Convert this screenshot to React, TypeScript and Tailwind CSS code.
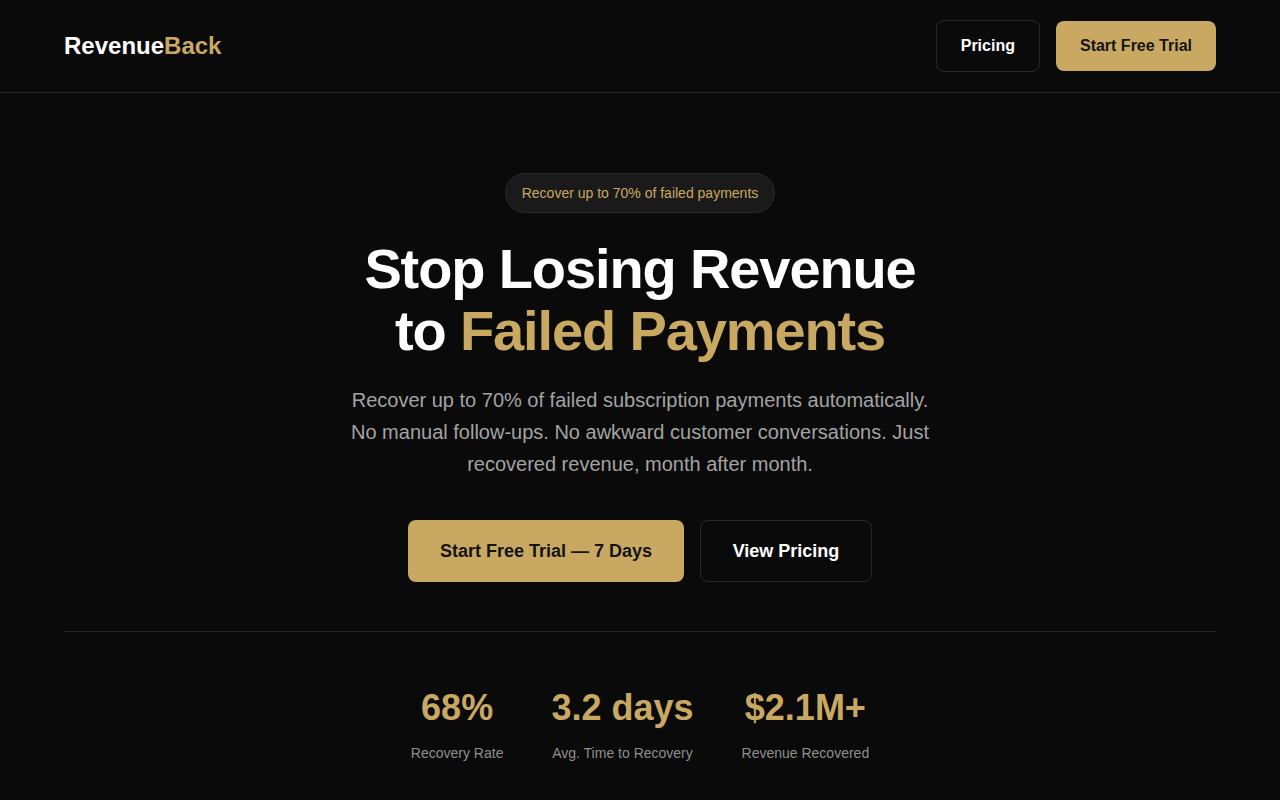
import React from "react";

export default function App() {
  return (
    <div className="min-h-screen w-full bg-[#0a0a0a] text-white" style={{ fontFamily: '"Liberation Sans", Arial, sans-serif' }}>
      <header className="flex h-[93px] items-center justify-between border-b border-[#262626] px-16">
        <div className="text-[24px] font-bold">
          <span className="text-white">Revenue</span>
          <span className="text-[#c9a962]">Back</span>
        </div>
        <div className="flex items-center gap-4">
          <button className="h-[52px] rounded-lg border border-[#2a2a2a] bg-[#0a0a0a] px-6 text-base font-bold text-white">
            Pricing
          </button>
          <button className="h-[50px] rounded-lg bg-[#c9a962] px-6 text-base font-bold text-[#141414]">
            Start Free Trial
          </button>
        </div>
      </header>

      <main className="flex flex-col items-center px-16 pt-20">
        <div className="flex h-10 items-center rounded-full border border-[#2a2a2a] bg-[#1a1a1a] px-4 text-sm text-[#c9a962]">
          Recover up to 70% of failed payments
        </div>
        <h1 className="mt-[25px] text-center text-[56px] font-bold leading-[62px] tracking-[-0.02em]">
          Stop Losing Revenue
          <br />
          to <span className="text-[#c9a962]">Failed Payments</span>
        </h1>
        <p className="mt-[22px] max-w-[600px] text-center text-[20px] leading-8 text-[#a3a3a3]">
          Recover up to 70% of failed subscription payments automatically. No manual follow-ups. No awkward customer conversations. Just recovered revenue, month after month.
        </p>
        <div className="mt-10 flex items-center gap-4">
          <button className="h-[62px] w-[276px] rounded-lg bg-[#c9a962] text-lg font-bold text-[#141414]">
            Start Free Trial — 7 Days
          </button>
          <button className="h-[62px] w-[172px] rounded-lg border border-[#2a2a2a] bg-[#0a0a0a] text-lg font-bold text-white">
            View Pricing
          </button>
        </div>
        <div className="mt-[49px] w-full border-t border-[#262626]" />
        <div className="flex items-start gap-12 pt-[56px]">
          <div className="flex flex-col items-center">
            <div className="text-4xl font-bold leading-10 text-[#c9a962]">68%</div>
            <div className="mt-[15px] text-sm text-[#8f8f8f]">Recovery Rate</div>
          </div>
          <div className="flex flex-col items-center">
            <div className="text-4xl font-bold leading-10 text-[#c9a962]">3.2 days</div>
            <div className="mt-[15px] text-sm text-[#8f8f8f]">Avg. Time to Recovery</div>
          </div>
          <div className="flex flex-col items-center">
            <div className="text-4xl font-bold leading-10 text-[#c9a962]">$2.1M+</div>
            <div className="mt-[15px] text-sm text-[#8f8f8f]">Revenue Recovered</div>
          </div>
        </div>
      </main>
    </div>
  );
}
